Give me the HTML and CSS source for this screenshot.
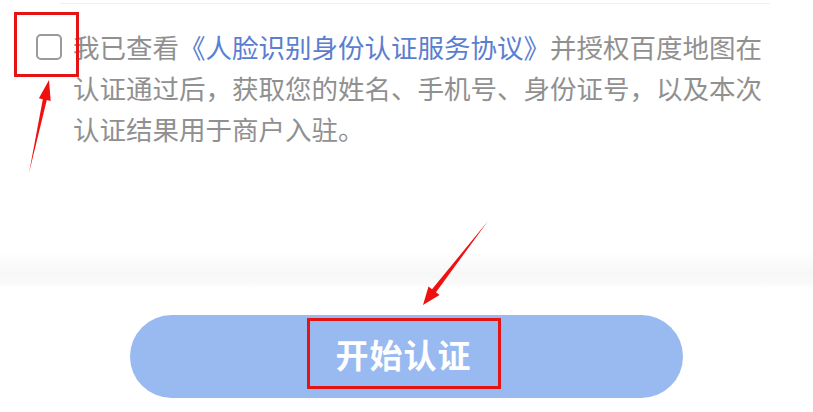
FILE: index.html
```html
<!DOCTYPE html>
<html lang="zh-CN">
<head>
    <meta charset="UTF-8">
    <meta name="viewport" content="width=device-width, initial-scale=1.0">
    <title>人脸识别身份认证</title>
<link rel="stylesheet" href="styles.css">
</head>
<body>
    <section class="card">
        <div class="top-line"></div>
        <div class="agree">
            <div class="check-wrap">
                <span class="check"></span>
                <span class="mark-box"></span>
            </div>
            <p class="agree-text">我已查看<a class="link" href="#">《人脸识别身份认证服务协议》</a>并授权百度地图在认证通过后，获取您的姓名、手机号、身份证号，以及本次认证结果用于商户入驻。</p>
        </div>
    </section>
    <div class="fade"></div>
    <section class="action">
        <button class="start-btn" type="button"><span class="btn-label">开始认证</span></button>
    </section>
    <svg class="arrows" width="813" height="412" viewBox="0 0 813 412">
        <polygon points="29,173 46.8,100 50.7,101 49,80 38.9,98.3 42.8,99.2" fill="#f01010"/>
        <polygon points="488,221 436,292.3 439.5,295.1 423,305 428.5,286.5 432,289.3" fill="#f01010"/>
    </svg>
</body>
</html>
```

FILE: styles.css
```css
    body {
        margin: 0;
        width: 813px;
        height: 412px;
        overflow: hidden;
        background: #fff;
        font-family: "Noto Sans CJK SC", "Noto Sans", sans-serif;
        position: relative;
    }
    .card {
        background: #fff;
        padding-bottom: 104px;
    }
    .top-line {
        height: 1px;
        margin: 3px 43px 0 60px;
        background: #f0f0f2;
    }
    .agree {
        display: flex;
        align-items: flex-start;
        gap: 11px;
        padding: 22px 0 0 36px;
    }
    .check-wrap {
        position: relative;
        margin-top: 8px;
        flex-shrink: 0;
    }
    .check {
        display: block;
        width: 26px;
        height: 26px;
        box-sizing: border-box;
        border: 2px solid #9a9a9a;
        border-radius: 5px;
    }
    .mark-box {
        position: absolute;
        left: -22px;
        top: -22px;
        width: 65px;
        height: 65px;
        box-sizing: border-box;
        border: 3px solid #e41414;
    }
    .agree-text {
        margin: 0;
        width: 694px;
        font-size: 26.5px;
        line-height: 41px;
        color: #909090;
    }
    .link {
        color: #5a7ed0;
        text-decoration: none;
    }
    .fade {
        height: 36px;
        background: linear-gradient(#fefefe, #f7f7f7 60%, #fafafa 85%, #fff);
    }
    .action {
        padding: 26px 0 0 130px;
    }
    .start-btn {
        display: flex;
        align-items: center;
        justify-content: center;
        width: 553px;
        height: 83px;
        border: none;
        border-radius: 42px;
        background: #99b9f1;
        padding: 0 6px 0 0;
        font-family: inherit;
    }
    .btn-label {
        display: flex;
        align-items: center;
        justify-content: center;
        width: 194px;
        height: 71px;
        box-sizing: border-box;
        border: 3px solid #e41414;
        margin-bottom: 6px;
        color: #fff;
        font-size: 33px;
        font-weight: bold;
        letter-spacing: 1px;
    }
    .arrows {
        position: absolute;
        left: 0;
        top: 0;
        pointer-events: none;
    }
```
